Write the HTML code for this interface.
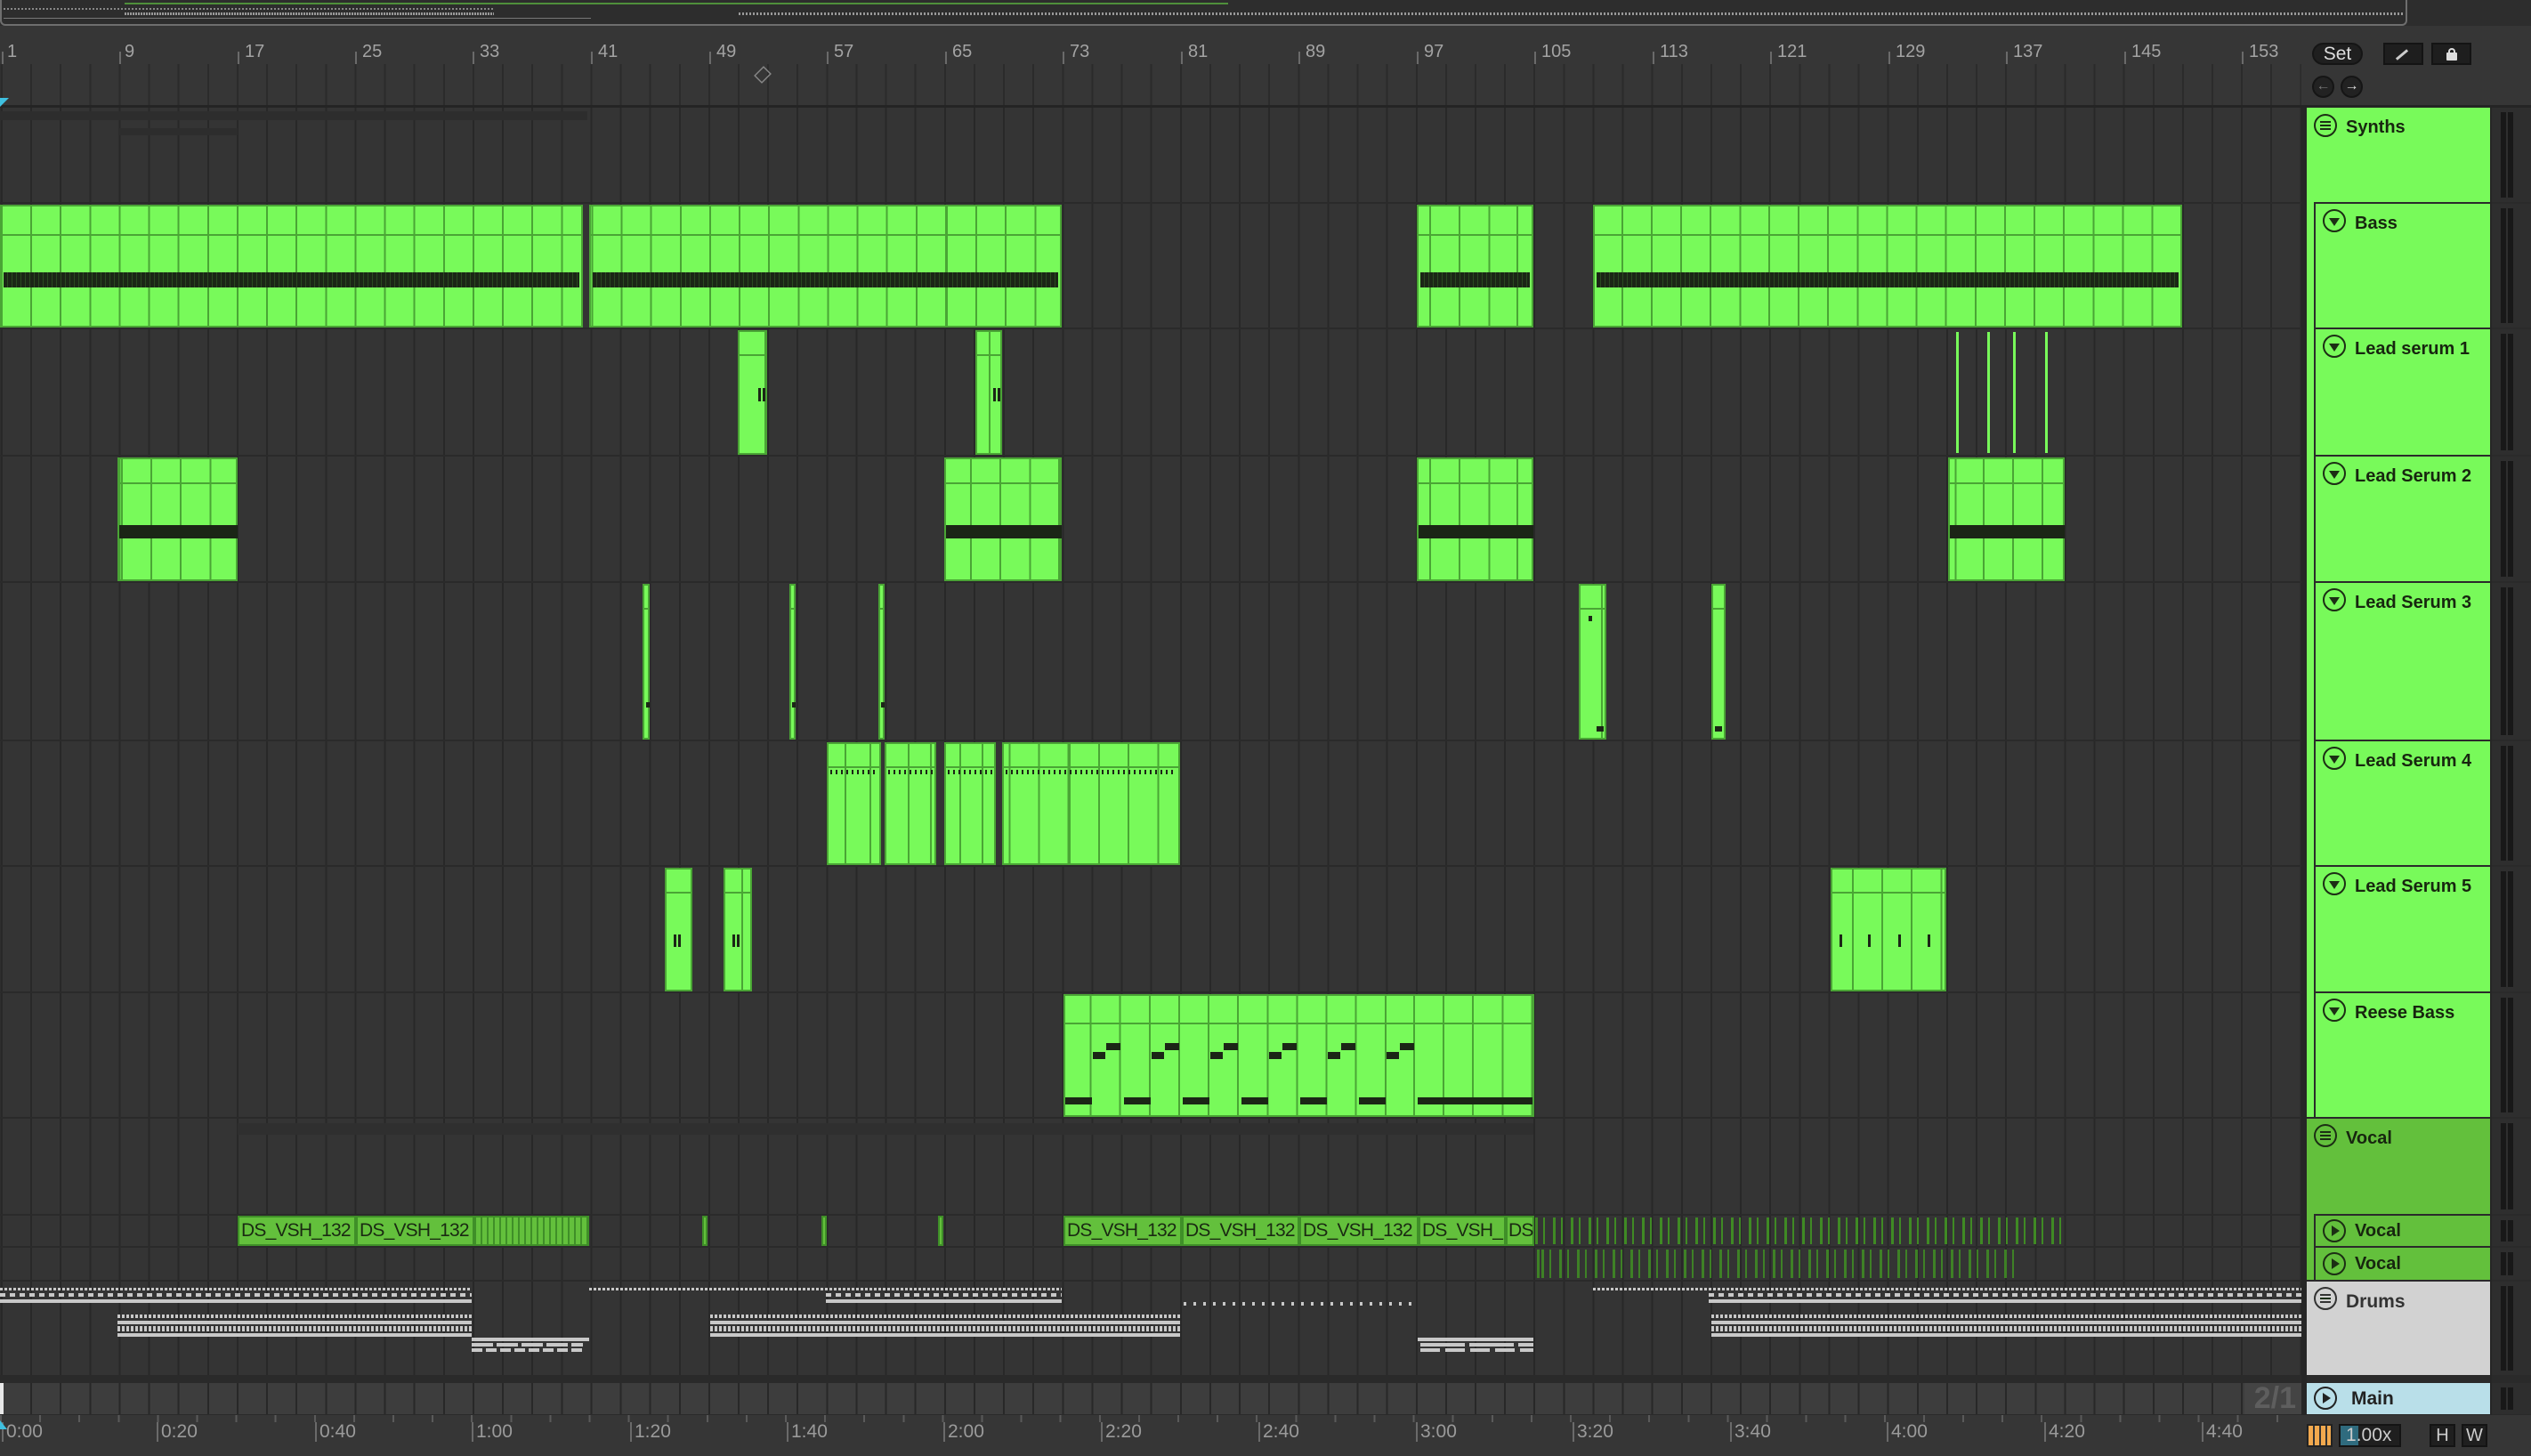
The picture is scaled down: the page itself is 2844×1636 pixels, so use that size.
<!DOCTYPE html>
<html><head><meta charset="utf-8"><style>
*{margin:0;padding:0;box-sizing:border-box}
body{width:2844px;height:1636px;background:#2a2a2a;position:relative;overflow:hidden;font-family:"Liberation Sans",sans-serif}
.a{position:absolute}
.row{position:absolute;left:0;width:2586px;background-color:#343434;background-image:repeating-linear-gradient(90deg,#282828 0 2px,transparent 2px 33.12px);background-position:1px 0}
.c{position:absolute;background-color:#78fa5a;background-image:repeating-linear-gradient(90deg,#4aa535 0 2px,transparent 2px 33.12px);box-shadow:inset 0 0 0 2px #4aa535}
.hl{position:absolute;left:0;right:0;height:2px;background:#4aa535}
.n{position:absolute;background:#1b2616}
.v{position:absolute;background:#63c03c;box-shadow:inset 0 0 0 2px #3f8f28;color:#1a2a12;font-size:21px;letter-spacing:-0.8px;line-height:34px;padding-left:4px;overflow:hidden;white-space:nowrap}
.hd{position:absolute;background:#78fa5a;color:#17260f;font-weight:bold;font-size:20px}
.hd span{position:absolute;top:11px}
.ic{position:absolute;width:26px;height:26px;border:2px solid #1c2e14;border-radius:50%}
.tri{position:absolute;left:5px;top:8px;width:0;height:0;border-left:6px solid transparent;border-right:6px solid transparent;border-top:9px solid #1c2e14}
.play{position:absolute;left:8px;top:5px;width:0;height:0;border-top:6px solid transparent;border-bottom:6px solid transparent;border-left:9px solid #1c2e14}
.lines{position:absolute;left:5px;top:6px;width:12px;height:10px;border-top:2px solid #1c2e14;border-bottom:2px solid #1c2e14}
.lines:after{content:"";position:absolute;left:0;top:2px;width:12px;height:2px;background:#1c2e14}
.m{position:absolute;left:2800px;width:44px;background:#2e2e2e}
.m:before,.m:after{content:"";position:absolute;top:5px;bottom:5px;width:6px;background:#181818}
.m:before{left:10px}.m:after{left:18px}
.rl{position:absolute;top:47px;color:#a3a3a3;font-size:20px}
.rt{position:absolute;top:58px;width:2px;height:14px;background:#6a6a6a}
.d{position:absolute;height:4px}
.d1{background:repeating-linear-gradient(90deg,#c8c8c8 0 3px,transparent 3px 5px)}
.d2{background:repeating-linear-gradient(90deg,#c8c8c8 0 6px,transparent 6px 11px)}
.d3{background:#c8c8c8}
.d4{background:repeating-linear-gradient(90deg,#c8c8c8 0 3px,transparent 3px 11px)}
.tl{position:absolute;top:1598px;color:#9a9a9a;font-size:21px;border-left:2px solid #6a6a6a;padding-left:3px;line-height:22px}
.vs{position:absolute;background:repeating-linear-gradient(90deg,#3f8a24 0 3px,transparent 3px 9px,#3f8a24 9px 11px,transparent 11px 20px)}
</style></head><body>
<div class="a" style="left:0;top:0;width:2844px;height:29px;background:#2d2d2d"></div>
<div class="a" style="left:0;top:0;width:2705px;height:29px;border:2px solid #6e6e6e;border-top:none;border-radius:0 0 6px 6px"></div>
<div class="a" style="left:140px;top:3px;width:1240px;height:2px;background:#4f8f3a"></div>
<div class="a" style="left:4px;top:9px;width:550px;height:2px;background:repeating-linear-gradient(90deg,#888 0 2px,transparent 2px 4px)"></div>
<div class="a" style="left:140px;top:14px;width:415px;height:3px;background:repeating-linear-gradient(90deg,#999 0 2px,transparent 2px 3px)"></div>
<div class="a" style="left:4px;top:20px;width:660px;height:1px;background:#777"></div>
<div class="a" style="left:830px;top:14px;width:1870px;height:3px;background:repeating-linear-gradient(90deg,#999 0 2px,transparent 2px 4px)"></div>
<div class="a" style="left:0;top:29px;width:2844px;height:92px;background:#363636"></div>
<div class="a" style="left:0;top:72px;width:2586px;height:46px;background-image:repeating-linear-gradient(90deg,#2b2b2b 0 2px,transparent 2px 33.12px);background-position:1px 0"></div>
<div class="a" style="left:0;top:118px;width:2844px;height:3px;background:#242424"></div>
<div class="rt" style="left:2px"></div><div class="rl" style="left:8px">1</div>
<div class="rt" style="left:134px"></div><div class="rl" style="left:140px">9</div>
<div class="rt" style="left:267px"></div><div class="rl" style="left:275px">17</div>
<div class="rt" style="left:399px"></div><div class="rl" style="left:407px">25</div>
<div class="rt" style="left:531px"></div><div class="rl" style="left:539px">33</div>
<div class="rt" style="left:664px"></div><div class="rl" style="left:672px">41</div>
<div class="rt" style="left:797px"></div><div class="rl" style="left:805px">49</div>
<div class="rt" style="left:929px"></div><div class="rl" style="left:937px">57</div>
<div class="rt" style="left:1062px"></div><div class="rl" style="left:1070px">65</div>
<div class="rt" style="left:1194px"></div><div class="rl" style="left:1202px">73</div>
<div class="rt" style="left:1327px"></div><div class="rl" style="left:1335px">81</div>
<div class="rt" style="left:1459px"></div><div class="rl" style="left:1467px">89</div>
<div class="rt" style="left:1592px"></div><div class="rl" style="left:1600px">97</div>
<div class="rt" style="left:1724px"></div><div class="rl" style="left:1732px">105</div>
<div class="rt" style="left:1857px"></div><div class="rl" style="left:1865px">113</div>
<div class="rt" style="left:1989px"></div><div class="rl" style="left:1997px">121</div>
<div class="rt" style="left:2122px"></div><div class="rl" style="left:2130px">129</div>
<div class="rt" style="left:2254px"></div><div class="rl" style="left:2262px">137</div>
<div class="rt" style="left:2387px"></div><div class="rl" style="left:2395px">145</div>
<div class="rt" style="left:2519px"></div><div class="rl" style="left:2527px">153</div>
<div class="a" style="left:848px;top:73px;width:18px;height:22px;border:2px solid #888;transform:rotate(45deg) scale(.7)"></div>
<div class="a" style="left:0;top:110px;width:0;height:0;border-left:10px solid #3fc0e0;border-bottom:10px solid transparent"></div>
<div class="a" style="left:2598px;top:48px;width:57px;height:25px;border-radius:13px;background:#1f1f1f;border:2px solid #151515;color:#ddd;font-size:21px;text-align:center;line-height:21px">Set</div>
<div class="a" style="left:2678px;top:48px;width:45px;height:25px;background:#1e1e1e;border:2px solid #141414"><div class="a" style="left:11px;top:10px;width:16px;height:3px;background:#ccc;transform:rotate(-40deg)"></div></div>
<div class="a" style="left:2732px;top:48px;width:45px;height:25px;background:#1e1e1e;border:2px solid #141414"><div class="a" style="left:15px;top:9px;width:12px;height:9px;background:#ddd;border-radius:1px"></div><div class="a" style="left:17px;top:4px;width:8px;height:8px;border:2px solid #ddd;border-radius:4px 4px 0 0;border-bottom:none"></div></div>
<div class="a" style="left:2598px;top:85px;width:25px;height:25px;border-radius:50%;background:#222;border:2px solid #151515;color:#777;font-size:16px;text-align:center;line-height:20px">←</div>
<div class="a" style="left:2630px;top:85px;width:25px;height:25px;border-radius:50%;background:#222;border:2px solid #151515;color:#ddd;font-size:16px;text-align:center;line-height:20px">→</div>

<div class="row" style="top:121px;height:106px"></div>
<div class="a" style="left:0;top:125px;width:660px;height:10px;background:#2d2d2d"></div>
<div class="a" style="left:133px;top:144px;width:134px;height:8px;background:#2d2d2d"></div>
<div class="row" style="top:229px;height:139px"></div>
<div class="row" style="top:370px;height:141px"></div>
<div class="row" style="top:513px;height:140px"></div>
<div class="row" style="top:655px;height:176px"></div>
<div class="row" style="top:833px;height:139px"></div>
<div class="row" style="top:974px;height:140px"></div>
<div class="row" style="top:1116px;height:139px"></div>
<div class="row" style="top:1257px;height:107px"></div>
<div class="a" style="left:267px;top:1262px;width:1456px;height:13px;background:#2f2f2f"></div>
<div class="row" style="top:1366px;height:34px"></div>
<div class="row" style="top:1402px;height:36px"></div>
<div class="row" style="top:1440px;height:105px"></div>
<div class="row" style="top:1554px;height:35px;background-color:#3d3d3d"></div>

<div class="c" style="left:0;top:230px;width:655px;height:138px;background-position:1px 0"><div class="hl" style="top:33px"></div><div class="n" style="left:4px;right:4px;top:76px;height:17px;background:repeating-linear-gradient(90deg,#1b2616 0 4px,#2a4a20 4px 5px)"></div></div>
<div class="c" style="left:662px;top:230px;width:531px;height:138px;background-position:-661px 0"><div class="hl" style="top:33px"></div><div class="n" style="left:4px;right:4px;top:76px;height:17px;background:repeating-linear-gradient(90deg,#1b2616 0 4px,#2a4a20 4px 5px)"></div></div>
<div class="c" style="left:1592px;top:230px;width:131px;height:138px;background-position:-1591px 0"><div class="hl" style="top:33px"></div><div class="n" style="left:4px;right:4px;top:76px;height:17px;background:repeating-linear-gradient(90deg,#1b2616 0 4px,#2a4a20 4px 5px)"></div></div>
<div class="c" style="left:1790px;top:230px;width:662px;height:138px;background-position:-1789px 0"><div class="hl" style="top:33px"></div><div class="n" style="left:4px;right:4px;top:76px;height:17px;background:repeating-linear-gradient(90deg,#1b2616 0 4px,#2a4a20 4px 5px)"></div></div>
<div class="c" style="left:829px;top:371px;width:33px;height:140px;background-position:-828px 0"><div class="hl" style="top:27px"></div><div class="n" style="left:23px;top:65px;width:3px;height:15px"></div><div class="n" style="left:28px;top:65px;width:3px;height:15px"></div></div>
<div class="c" style="left:1096px;top:371px;width:30px;height:140px;background-position:-1095px 0"><div class="hl" style="top:27px"></div><div class="n" style="left:20px;top:65px;width:3px;height:15px"></div><div class="n" style="left:25px;top:65px;width:3px;height:15px"></div></div>
<div class="a" style="left:2198px;top:373px;width:3px;height:136px;background:#78fa5a"></div>
<div class="a" style="left:2233px;top:373px;width:3px;height:136px;background:#78fa5a"></div>
<div class="a" style="left:2262px;top:373px;width:3px;height:136px;background:#78fa5a"></div>
<div class="a" style="left:2298px;top:373px;width:3px;height:136px;background:#78fa5a"></div>
<div class="c" style="left:132px;top:514px;width:135px;height:139px;background-position:-131px 0"><div class="hl" style="top:28px"></div><div class="n" style="left:2px;right:0;top:76px;height:15px"></div></div>
<div class="c" style="left:1061px;top:514px;width:132px;height:139px;background-position:-1060px 0"><div class="hl" style="top:28px"></div><div class="n" style="left:2px;right:0;top:76px;height:15px"></div></div>
<div class="c" style="left:1592px;top:514px;width:131px;height:139px;background-position:-1591px 0"><div class="hl" style="top:28px"></div><div class="n" style="left:2px;right:0;top:76px;height:15px"></div></div>
<div class="c" style="left:2189px;top:514px;width:131px;height:139px;background-position:-2188px 0"><div class="hl" style="top:28px"></div><div class="n" style="left:2px;right:0;top:76px;height:15px"></div></div>
<div class="c" style="left:722px;top:656px;width:8px;height:175px;background-position:0 0"><div class="hl" style="top:27px"></div><div class="n" style="left:4px;top:133px;width:4px;height:6px"></div></div>
<div class="c" style="left:887px;top:656px;width:7px;height:175px;background-position:0 0"><div class="hl" style="top:27px"></div><div class="n" style="left:3px;top:133px;width:4px;height:6px"></div></div>
<div class="c" style="left:987px;top:656px;width:7px;height:175px;background-position:0 0"><div class="hl" style="top:27px"></div><div class="n" style="left:3px;top:133px;width:4px;height:6px"></div></div>
<div class="c" style="left:1774px;top:656px;width:31px;height:175px;background-position:-1773px 0"><div class="hl" style="top:27px"></div><div class="n" style="left:11px;top:36px;width:4px;height:6px"></div><div class="n" style="left:20px;top:160px;width:8px;height:6px"></div></div>
<div class="c" style="left:1923px;top:656px;width:16px;height:175px;background-position:0 0"><div class="hl" style="top:27px"></div><div class="n" style="left:4px;top:160px;width:8px;height:6px"></div></div>
<div class="c" style="left:929px;top:834px;width:61px;height:138px;background-position:-928px 0"><div class="hl" style="top:27px"></div><div class="a" style="left:4px;right:4px;top:31px;height:5px;background:repeating-linear-gradient(90deg,#1b2616 0 2px,transparent 2px 6px)"></div></div>
<div class="c" style="left:994px;top:834px;width:58px;height:138px;background-position:-993px 0"><div class="hl" style="top:27px"></div><div class="a" style="left:4px;right:4px;top:31px;height:5px;background:repeating-linear-gradient(90deg,#1b2616 0 2px,transparent 2px 6px)"></div></div>
<div class="c" style="left:1061px;top:834px;width:58px;height:138px;background-position:-1060px 0"><div class="hl" style="top:27px"></div><div class="a" style="left:4px;right:4px;top:31px;height:5px;background:repeating-linear-gradient(90deg,#1b2616 0 2px,transparent 2px 6px)"></div></div>
<div class="c" style="left:1126px;top:834px;width:200px;height:138px;background-position:-1125px 0"><div class="hl" style="top:27px"></div><div class="a" style="left:4px;right:4px;top:31px;height:5px;background:repeating-linear-gradient(90deg,#1b2616 0 2px,transparent 2px 6px)"></div></div>
<div class="c" style="left:747px;top:975px;width:31px;height:139px;background-position:-746px 0"><div class="hl" style="top:27px"></div><div class="n" style="left:10px;top:75px;width:3px;height:14px"></div><div class="n" style="left:15px;top:75px;width:3px;height:14px"></div></div>
<div class="c" style="left:813px;top:975px;width:32px;height:139px;background-position:-812px 0"><div class="hl" style="top:27px"></div><div class="n" style="left:10px;top:75px;width:3px;height:14px"></div><div class="n" style="left:15px;top:75px;width:3px;height:14px"></div></div>
<div class="c" style="left:2057px;top:975px;width:130px;height:139px;background-position:-2056px 0"><div class="hl" style="top:27px"></div><div class="n" style="left:10px;top:75px;width:3px;height:14px"></div><div class="n" style="left:42px;top:75px;width:3px;height:14px"></div><div class="n" style="left:76px;top:75px;width:3px;height:14px"></div><div class="n" style="left:109px;top:75px;width:3px;height:14px"></div></div>
<div class="c" style="left:1195px;top:1117px;width:529px;height:138px;background-position:-1194px 0"><div class="hl" style="top:32px"></div>
<div class="n" style="left:2px;top:116px;width:30px;height:8px"></div><div class="n" style="left:33px;top:65px;width:14px;height:8px"></div><div class="n" style="left:48px;top:55px;width:16px;height:8px"></div>
<div class="n" style="left:68px;top:116px;width:30px;height:8px"></div><div class="n" style="left:99px;top:65px;width:14px;height:8px"></div><div class="n" style="left:114px;top:55px;width:16px;height:8px"></div>
<div class="n" style="left:134px;top:116px;width:30px;height:8px"></div><div class="n" style="left:165px;top:65px;width:14px;height:8px"></div><div class="n" style="left:180px;top:55px;width:16px;height:8px"></div>
<div class="n" style="left:200px;top:116px;width:30px;height:8px"></div><div class="n" style="left:231px;top:65px;width:14px;height:8px"></div><div class="n" style="left:246px;top:55px;width:16px;height:8px"></div>
<div class="n" style="left:266px;top:116px;width:30px;height:8px"></div><div class="n" style="left:297px;top:65px;width:14px;height:8px"></div><div class="n" style="left:312px;top:55px;width:16px;height:8px"></div>
<div class="n" style="left:332px;top:116px;width:30px;height:8px"></div><div class="n" style="left:363px;top:65px;width:14px;height:8px"></div><div class="n" style="left:378px;top:55px;width:16px;height:8px"></div>
<div class="n" style="left:398px;top:116px;width:129px;height:8px"></div></div>
<div class="v" style="left:267px;top:1366px;width:133px;height:34px">DS_VSH_132</div>
<div class="v" style="left:400px;top:1366px;width:133px;height:34px">DS_VSH_132</div>
<div class="v" style="left:533px;top:1366px;width:129px;height:34px;background:#63c03c repeating-linear-gradient(90deg,#3f8f28 0 2px,transparent 2px 7px)"></div>
<div class="v" style="left:789px;top:1366px;width:6px;height:34px;padding:0"></div>
<div class="v" style="left:923px;top:1366px;width:6px;height:34px;padding:0"></div>
<div class="v" style="left:1054px;top:1366px;width:6px;height:34px;padding:0"></div>
<div class="v" style="left:1195px;top:1366px;width:133px;height:34px">DS_VSH_132</div>
<div class="v" style="left:1328px;top:1366px;width:132px;height:34px">DS_VSH_132</div>
<div class="v" style="left:1460px;top:1366px;width:134px;height:34px">DS_VSH_132</div>
<div class="v" style="left:1594px;top:1366px;width:98px;height:34px">DS_VSH_</div>
<div class="v" style="left:1692px;top:1366px;width:32px;height:34px;padding-left:3px">DS</div>
<div class="vs" style="left:1725px;top:1368px;width:592px;height:30px"></div>
<div class="vs" style="left:1725px;top:1404px;width:545px;height:32px;opacity:.9;background-position:7px 0"></div>
<div class="a d d1" style="left:0;top:1447px;width:530px;height:3px"></div>
<div class="a d d2" style="left:0;top:1453px;width:530px"></div>
<div class="a d d3" style="left:0;top:1460px;width:530px"></div>
<div class="a d d1" style="left:662px;top:1447px;width:531px;height:3px"></div>
<div class="a d d2" style="left:928px;top:1453px;width:265px"></div>
<div class="a d d3" style="left:928px;top:1460px;width:265px"></div>
<div class="a d d1" style="left:1790px;top:1447px;width:796px;height:3px"></div>
<div class="a d d2" style="left:1920px;top:1453px;width:666px"></div>
<div class="a d d3" style="left:1920px;top:1460px;width:666px"></div>
<div class="a d d4" style="left:1330px;top:1463px;width:261px"></div>
<div class="a d d1" style="left:132px;top:1477px;width:398px"></div>
<div class="a d d3" style="left:132px;top:1484px;width:398px"></div>
<div class="a d d1" style="left:132px;top:1490px;width:398px;height:6px"></div>
<div class="a d d3" style="left:132px;top:1498px;width:398px"></div>
<div class="a d d1" style="left:798px;top:1477px;width:528px"></div>
<div class="a d d3" style="left:798px;top:1484px;width:528px"></div>
<div class="a d d1" style="left:798px;top:1490px;width:528px;height:6px"></div>
<div class="a d d3" style="left:798px;top:1498px;width:528px"></div>
<div class="a d d1" style="left:1923px;top:1477px;width:663px"></div>
<div class="a d d3" style="left:1923px;top:1484px;width:663px"></div>
<div class="a d d1" style="left:1923px;top:1490px;width:663px;height:6px"></div>
<div class="a d d3" style="left:1923px;top:1498px;width:663px"></div>
<div class="a d d3" style="left:530px;top:1503px;width:132px"></div>
<div class="a d" style="left:530px;top:1509px;width:125px;background:repeating-linear-gradient(90deg,#c8c8c8 0 24px,transparent 24px 28px)"></div>
<div class="a d" style="left:530px;top:1515px;width:125px;background:repeating-linear-gradient(90deg,#c8c8c8 0 12px,transparent 12px 16px)"></div>
<div class="a d d3" style="left:1593px;top:1503px;width:130px"></div>
<div class="a d" style="left:1596px;top:1509px;width:127px;background:repeating-linear-gradient(90deg,#c8c8c8 0 50px,transparent 50px 55px)"></div>
<div class="a d" style="left:1596px;top:1515px;width:127px;background:repeating-linear-gradient(90deg,#c8c8c8 0 22px,transparent 22px 28px)"></div>
<div class="a" style="left:0;top:1554px;width:4px;height:35px;background:#e8e8e8"></div>
<div class="a" style="left:2522px;top:1554px;width:64px;height:35px;background:#444;color:#5e5e5e;font-size:34px;font-weight:bold;line-height:35px;text-align:right;padding-right:6px">2/1</div>

<div class="a" style="left:2586px;top:121px;width:6px;height:1515px;background:#262626"></div>
<div class="a" style="left:2798px;top:121px;width:2px;height:1470px;background:#262626"></div>
<div class="hd" style="left:2592px;top:121px;width:206px;height:106px"><div class="ic" style="left:8px;top:7px"><div class="lines"></div></div><span style="left:44px">Synths</span></div>
<div class="a" style="left:2592px;top:227px;width:8px;height:1028px;background:#78fa5a"></div>
<div class="hd" style="left:2602px;top:229px;width:196px;height:139px"><div class="ic" style="left:8px;top:6px"><div class="tri"></div></div><span style="left:44px">Bass</span></div>
<div class="hd" style="left:2602px;top:370px;width:196px;height:141px"><div class="ic" style="left:8px;top:6px"><div class="tri"></div></div><span style="left:44px">Lead serum 1</span></div>
<div class="hd" style="left:2602px;top:513px;width:196px;height:140px"><div class="ic" style="left:8px;top:6px"><div class="tri"></div></div><span style="left:44px">Lead Serum 2</span></div>
<div class="hd" style="left:2602px;top:655px;width:196px;height:176px"><div class="ic" style="left:8px;top:6px"><div class="tri"></div></div><span style="left:44px">Lead Serum 3</span></div>
<div class="hd" style="left:2602px;top:833px;width:196px;height:139px"><div class="ic" style="left:8px;top:6px"><div class="tri"></div></div><span style="left:44px">Lead Serum 4</span></div>
<div class="hd" style="left:2602px;top:974px;width:196px;height:140px"><div class="ic" style="left:8px;top:6px"><div class="tri"></div></div><span style="left:44px">Lead Serum 5</span></div>
<div class="hd" style="left:2602px;top:1116px;width:196px;height:139px"><div class="ic" style="left:8px;top:6px"><div class="tri"></div></div><span style="left:44px">Reese Bass</span></div>
<div class="hd" style="left:2592px;top:1257px;width:206px;height:107px;background:#63c03c"><div class="ic" style="left:8px;top:6px"><div class="lines"></div></div><span style="left:44px">Vocal</span></div>
<div class="a" style="left:2592px;top:1364px;width:8px;height:74px;background:#63c03c"></div>
<div class="hd" style="left:2602px;top:1366px;width:196px;height:34px;background:#63c03c"><div class="ic" style="left:8px;top:4px"><div class="play"></div></div><span style="left:44px;top:6px">Vocal</span></div>
<div class="hd" style="left:2602px;top:1402px;width:196px;height:36px;background:#63c03c"><div class="ic" style="left:8px;top:5px"><div class="play"></div></div><span style="left:44px;top:7px">Vocal</span></div>
<div class="hd" style="left:2592px;top:1440px;width:206px;height:105px;background:#d2d2d2;color:#333;font-size:21px"><div class="ic" style="left:8px;top:6px;border-color:#333"><div class="lines" style="border-color:#333"></div></div><span style="left:44px">Drums</span></div>
<div class="hd" style="left:2592px;top:1554px;width:206px;height:35px;background:#b9dfe9;color:#222;font-size:21px"><div class="ic" style="left:8px;top:4px;border-color:#222"><div class="play" style="border-left-color:#222"></div></div><span style="left:50px;top:6px">Main</span></div>

<div class="m" style="top:121px;height:106px"></div>
<div class="m" style="top:229px;height:139px"></div>
<div class="m" style="top:370px;height:141px"></div>
<div class="m" style="top:513px;height:140px"></div>
<div class="m" style="top:655px;height:176px"></div>
<div class="m" style="top:833px;height:139px"></div>
<div class="m" style="top:974px;height:140px"></div>
<div class="m" style="top:1116px;height:139px"></div>
<div class="m" style="top:1257px;height:107px"></div>
<div class="m" style="top:1366px;height:34px"></div>
<div class="m" style="top:1402px;height:36px"></div>
<div class="m" style="top:1440px;height:105px"></div>
<div class="m" style="top:1554px;height:35px"></div>

<div class="a" style="left:0;top:1590px;width:2844px;height:46px;background:#363636"></div>
<div class="a" style="left:0;top:1590px;width:2586px;height:8px;background:repeating-linear-gradient(90deg,#5a5a5a 0 2px,transparent 2px 44.1px)"></div>
<div class="tl" style="left:2px">0:00</div><div class="tl" style="left:176px">0:20</div><div class="tl" style="left:354px">0:40</div><div class="tl" style="left:530px">1:00</div><div class="tl" style="left:708px">1:20</div><div class="tl" style="left:884px">1:40</div><div class="tl" style="left:1060px">2:00</div><div class="tl" style="left:1237px">2:20</div><div class="tl" style="left:1414px">2:40</div><div class="tl" style="left:1591px">3:00</div><div class="tl" style="left:1767px">3:20</div><div class="tl" style="left:1944px">3:40</div><div class="tl" style="left:2120px">4:00</div><div class="tl" style="left:2297px">4:20</div><div class="tl" style="left:2474px">4:40</div>
<div class="a" style="left:0;top:1596px;width:0;height:0;border-left:8px solid #3fc0e0;border-top:10px solid transparent"></div>
<div class="a" style="left:2592px;top:1600px;width:29px;height:26px;background:#f2a94e;border:2px solid #222;background-image:repeating-linear-gradient(90deg,transparent 0 5px,#333 5px 7px)"></div>
<div class="a" style="left:2628px;top:1600px;width:70px;height:26px;background:#1f1f1f;border:2px solid #141414;color:#ccc;font-size:21px;line-height:22px"><div class="a" style="left:0;top:0;width:20px;height:22px;background:#2f6b7e"></div><span style="position:relative;padding-left:6px">1.00x</span></div>
<div class="a" style="left:2730px;top:1600px;width:29px;height:26px;background:#1f1f1f;border:2px solid #141414;color:#ccc;font-size:20px;text-align:center;line-height:22px">H</div>
<div class="a" style="left:2766px;top:1600px;width:29px;height:26px;background:#1f1f1f;border:2px solid #141414;color:#ccc;font-size:20px;text-align:center;line-height:22px">W</div>
</body></html>
